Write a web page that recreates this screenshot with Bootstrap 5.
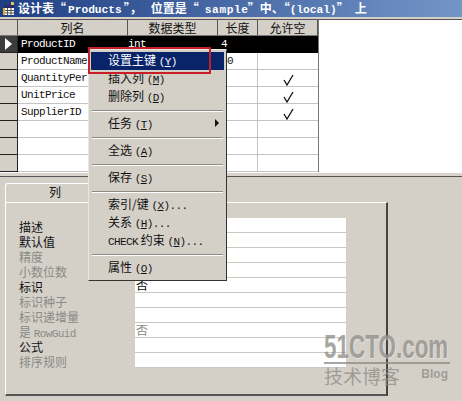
<!DOCTYPE html>
<html lang="en">
<head>
  <meta charset="UTF-8">
  <title>设计表</title>
  <link href="https://cdn.jsdelivr.net/npm/bootstrap@5.3.3/dist/css/bootstrap.min.css" rel="stylesheet">
  <style>
    body {
      width: 462px;
      height: 401px;
      overflow: hidden;
      background: #fff;
      font-family: "Noto Sans CJK SC", sans-serif;
      font-size: 12px;
      line-height: 15px;
      color: #111;
    }
    .mono { font-family: "Liberation Mono", monospace; font-size: 11px; letter-spacing: -.6px; }
    .title-bar {
      height: 19px;
      padding-left: 3px;
      gap: 3px;
      background: linear-gradient(90deg, #1f3f84, #7396c8);
      border-bottom: 2px solid #d4d0c8;
      color: #fff;
      font-weight: 700;
      white-space: nowrap;
    }
    .title-bar .mono { font-size: 11.2px; letter-spacing: 0; }
    .title-bar .q1 { margin: 0 2px; }
    .title-bar .q2 { margin-left: 9px; }
    .title-bar .q3 { margin: 0 -1px 0 6px; letter-spacing: .6px; }
    .title-bar .q4 { margin-left: 6px; }
    .grid-area {
      height: 157px;
      border-top: 1px solid #555;
      border-bottom: 3px solid #d8d4cc;
    }
    .grid-wrap { width: 319px; border-right: 1px solid #777; }
    .cell-h, .cell-n, .cell-t, .cell-l, .cell-a { flex: none; height: 17px; line-height: 15px; }
    .cell-h { width: 18px; background: #d4d0c8; border-right: 1px solid #222; border-bottom: 1px solid #222; }
    .cell-n { width: 110px; padding: 1px 0 0 3px; }
    .cell-t { width: 90px; padding-top: 1px; }
    .cell-l { width: 40px; padding: 1px 0 0 3px; }
    .cell-a { width: 60px; text-align: center; }
    .grid-head > div {
      height: 16px;
      background: #d4d0c8;
      border-right: 1px solid #555;
      border-bottom: 1px solid #777;
      text-align: center;
      padding: 0;
    }
    .grid-line > div:not(.cell-h) {
      border-right: 1px solid #c4c4c4;
      border-bottom: 1px solid #c4c4c4;
    }
    .grid-line > .cell-a { border-right: 0 !important; }
    .grid-line.picked > div { background: #000; color: #fff; border-color: #000 !important; }
    .grid-line.picked > .cell-h { background: #3c3c3c; border-color: #222 !important; }
    .arrow {
      width: 0;
      height: 0;
      margin: 2px 0 0 5px;
      border-left: 7px solid #fff;
      border-top: 6px solid transparent;
      border-bottom: 6px solid transparent;
    }
    .lower {
      height: 225px;
      background: #d4d0c8;
      border-top: 1px solid #555;
      padding: 6px 0 0 5px;
    }
    .page-tab {
      width: 100px;
      height: 19px;
      border: 1px solid #fff;
      border-bottom: 0;
      border-radius: 3px 3px 0 0;
      text-align: center;
    }
    .tab-box {
      width: 383px;
      height: 194px;
      border-top: 1px solid #fff;
      border-left: 1px solid #fff;
      border-right: 2px solid #444;
      border-bottom: 2px solid #555;
      padding: 15px 0 0 13px;
    }
    .prop-line { height: 15px; }
    .prop-name { width: 116px; padding-top: 2px; line-height: 13px; white-space: nowrap; }
    .prop-name.off, .prop-val.off { color: #8a8a86; }
    .prop-val {
      width: 211px;
      background: #fff;
      border-bottom: 1px solid #c8c8c4;
      padding-left: 1px;
      line-height: 14px;
    }
    .ctx-menu.dropdown-menu {
      top: 49px;
      left: 88px;
      width: 139px;
      min-width: 0;
      padding: 2px 2px 3px;
      margin: 0;
      background: #d4d0c8;
      border: 1px solid #e8e6e0;
      border-right-color: #333;
      border-bottom-color: #333;
      border-radius: 0;
    }
    .ctx-menu .dropdown-item {
      height: 18px;
      line-height: 16px;
      padding: 0 0 0 17px;
      color: #111;
      font-size: 12px;
    }
    .ctx-menu .dropdown-item.active { background: #0a246a; color: #fff; }
    .ctx-menu .dropdown-divider {
      height: 2px;
      margin: 4px 1px 3px;
      border-top: 1px solid #8c8a84;
      border-bottom: 1px solid #fff;
      opacity: 1;
    }
    .sub-arrow {
      width: 0;
      height: 0;
      margin: 4px 5px 0 0;
      border-left: 4px solid #111;
      border-top: 4px solid transparent;
      border-bottom: 4px solid transparent;
    }
    .red-box {
      position: absolute;
      z-index: 1001;
      top: 47px;
      left: 88px;
      width: 123px;
      height: 27px;
      border: 2px solid #c81e28;
      pointer-events: none;
    }
    .mark-wrap {
      position: absolute;
      z-index: 1002;
      left: 324px;
      top: 331px;
      width: 126px;
      color: rgba(140, 138, 132, .75);
    }
    .mark-big {
      font-family: "Liberation Sans", sans-serif;
      font-size: 33px;
      line-height: 31px;
      font-weight: 700;
      white-space: nowrap;
      transform: scaleX(.68);
      transform-origin: left center;
      text-shadow: 1px 1px 0 rgba(255, 255, 255, .4);
    }
    .mark-rule { height: 2px; background: rgba(140, 138, 132, .75); }
    .mark-cn { font-size: 19px; line-height: 24px; }
    .mark-blog { font-family: "Liberation Sans", sans-serif; font-size: 12px; line-height: 14px; font-weight: 700; margin: 3px 2px 0 0; }
  </style>
</head>
<body class="position-relative">

  <div class="title-bar d-flex align-items-center">
    <svg width="12" height="14" viewBox="0 0 12 14">
      <rect x="1" y="3" width="10" height="10" fill="#fff"/>
      <path d="M1 3h10v3H1z" fill="#2b2b6a"/>
      <path d="M1 8.5h10M1 11h10M4.5 6v7M8 6v7" stroke="#555" fill="none"/>
      <path d="M0 6h2v7H0z" fill="#d8b030"/>
      <path d="M8 0h3v3H8z" fill="#e0c060"/>
    </svg>
    <span>设计表“<span class="mono q1">Products</span>”，<span class="q2">位置是</span>“<span class="mono q3">sample</span>”中、“<span class="mono">(local)</span>”<span class="q4">上</span></span>
  </div>

  <div class="grid-area">
    <div class="grid-wrap">
      <div class="grid-head d-flex">
        <div class="cell-h"></div><div class="cell-n">列名</div><div class="cell-t">数据类型</div><div class="cell-l">长度</div><div class="cell-a">允许空</div>
      </div>
      <div id="gridLines"></div>
    </div>
  </div>

  <div class="lower">
    <div class="page-tab">列</div>
    <div class="tab-box" id="propBox"></div>
  </div>

  <div class="dropdown-menu show ctx-menu">
    <a class="dropdown-item active" href="#">设置主键 <span class="mono">(<u>Y</u>)</span></a>
    <a class="dropdown-item" href="#">插入列 <span class="mono">(<u>M</u>)</span></a>
    <a class="dropdown-item" href="#">删除列 <span class="mono">(<u>D</u>)</span></a>
    <div class="dropdown-divider"></div>
    <a class="dropdown-item d-flex justify-content-between" href="#"><span>任务 <span class="mono">(<u>T</u>)</span></span><span class="sub-arrow"></span></a>
    <div class="dropdown-divider"></div>
    <a class="dropdown-item" href="#">全选 <span class="mono">(<u>A</u>)</span></a>
    <div class="dropdown-divider"></div>
    <a class="dropdown-item" href="#">保存 <span class="mono">(<u>S</u>)</span></a>
    <div class="dropdown-divider"></div>
    <a class="dropdown-item" href="#">索引/键 <span class="mono">(<u>X</u>)...</span></a>
    <a class="dropdown-item" href="#">关系 <span class="mono">(<u>H</u>)...</span></a>
    <a class="dropdown-item" href="#"><span class="mono">CHECK</span> 约束 <span class="mono">(<u>N</u>)...</span></a>
    <div class="dropdown-divider"></div>
    <a class="dropdown-item" href="#">属性 <span class="mono">(<u>O</u>)</span></a>
  </div>
  <div class="red-box"></div>

  <div class="mark-wrap">
    <div class="mark-big">51CTO.com</div>
    <div class="mark-rule"></div>
    <div class="d-flex justify-content-between">
      <span class="mark-cn">技术博客</span>
      <span class="mark-blog">Blog</span>
    </div>
  </div>

  <script>
    const check = '<svg width="11" height="12" viewBox="0 0 11 12"><path d="M1 6l3 5 6-10" fill="none" stroke="#111" stroke-width="1.3"/></svg>';
    const columns = [
      ["ProductID", "int", "4", ""],
      ["ProductName", "", "40", ""],
      ["QuantityPer", "", "", check],
      ["UnitPrice", "", "", check],
      ["SupplierID", "", "", check],
      ["", "", "", ""],
      ["", "", "", ""],
      ["", "", "", ""]
    ];
    document.getElementById("gridLines").innerHTML = columns.map((c, i) =>
      `<div class="grid-line d-flex ${i === 0 ? "picked" : ""}">
        <div class="cell-h">${i === 0 ? '<div class="arrow"></div>' : ""}</div>
        <div class="cell-n mono">${c[0]}</div><div class="cell-t mono">${c[1]}</div><div class="cell-l mono">${c[2]}</div><div class="cell-a">${c[3]}</div>
      </div>`).join("");

    const props = [
      ["描述", "", 0], ["默认值", "", 0], ["精度", "", 1], ["小数位数", "", 1], ["标识", "否", 0],
      ["标识种子", "", 1], ["标识递增量", "", 1], ['是 <span class="mono">RowGuid</span>', "否", 1], ["公式", "", 0], ["排序规则", "", 1]
    ];
    document.getElementById("propBox").innerHTML = props.map(p =>
      `<div class="prop-line d-flex">
        <div class="prop-name ${p[2] ? "off" : ""}">${p[0]}</div>
        <div class="prop-val ${p[2] ? "off" : ""}">${p[1]}</div>
      </div>`).join("");
  </script>

  <script src="https://cdn.jsdelivr.net/npm/bootstrap@5.3.3/dist/js/bootstrap.bundle.min.js"></script>

</body>
</html>
